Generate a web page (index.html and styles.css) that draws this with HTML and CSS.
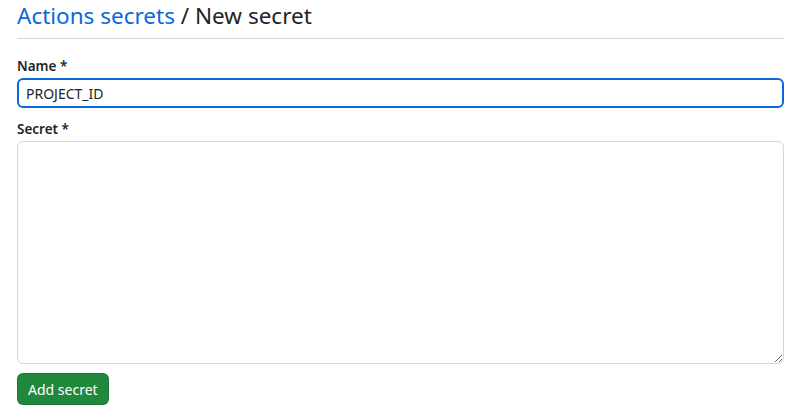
FILE: index.html
```html
<!DOCTYPE html>
<html>
<head>
<meta charset="utf-8">
<link rel="stylesheet" href="styles.css">
</head>
<body>
<div class="page">
  <div class="header">
    <h2 class="title"><a class="crumb" href="#">Actions secrets</a> / New secret</h2>
  </div>
  <form class="form">
    <div class="group">
      <label class="label">Name *</label>
      <input class="input focused" type="text" value="PROJECT_ID">
    </div>
    <div class="group">
      <label class="label">Secret *</label>
      <textarea class="textarea"></textarea>
    </div>
    <div class="actions">
      <button class="btn" type="button">Add secret</button>
    </div>
  </form>
</div>
</body>
</html>
```
FILE: styles.css
```css
* { box-sizing: border-box; }
body {
  margin: 0;
  background: #fff;
  font-family: "Noto Sans", "Open Sans", sans-serif;
  color: #1f2328;
}
.page {
  padding: 0 17px;
}
.header {
  border-bottom: 1px solid #d1d9e0;
  padding-bottom: 7px;
  margin-bottom: 17px;
}
.title {
  margin: 0;
  font-size: 22.5px;
  font-weight: 400;
  line-height: 31px;
  white-space: nowrap;
}
.crumb {
  color: #0969da;
  text-decoration: none;
}
.group {
  display: flex;
  flex-direction: column;
  margin-bottom: 11px;
}
.label {
  font-size: 13.5px;
  font-weight: 600;
  line-height: 20px;
  margin-bottom: 2px;
}
.input {
  height: 30px;
  border: 1px solid #d1d9e0;
  border-radius: 6px;
  padding: 4px 8px;
  font-family: inherit;
  font-size: 14px;
  color: #1f2328;
  outline: none;
}
.input.focused {
  border: 2px solid #0969da;
  padding: 3px 7px;
}
.textarea {
  height: 223px;
  border: 1px solid #d1d9e0;
  border-radius: 6px;
  padding: 8px;
  font-family: inherit;
  font-size: 14px;
  resize: vertical;
  outline: none;
}
.actions {
  margin-top: -2px;
}
.btn {
  background: #1f883d;
  color: #fff;
  border: 1px solid rgba(31,35,40,0.15);
  border-radius: 6px;
  height: 32px;
  padding: 0 10px;
  font-family: inherit;
  font-size: 14px;
  font-weight: 400;
}
```
